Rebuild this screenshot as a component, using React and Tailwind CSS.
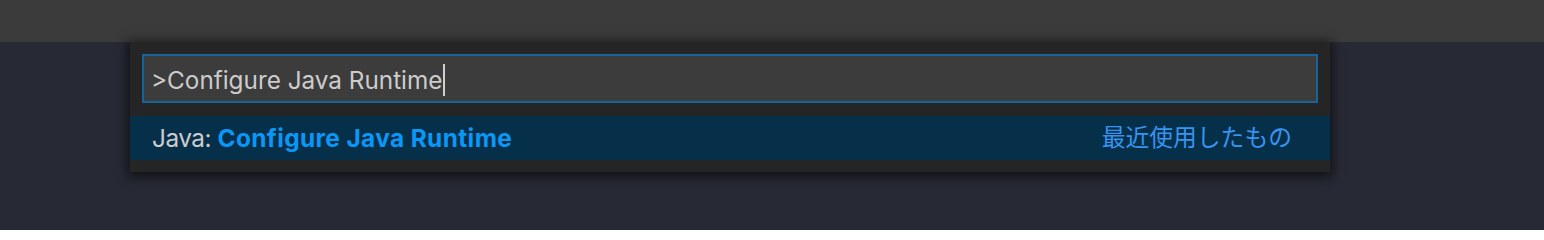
import React from "react";

const App = () => {
  return (
    <main className="w-full h-[230px] bg-[#272934] overflow-hidden font-['Inter','Noto_Sans_CJK_JP',sans-serif]">
      {/* Title / tab strip */}
      <div className="h-[42px] bg-[#3b3b3b]" />

      {/* Quick open widget */}
      <div className="ml-[130px] w-[1200px] bg-[#252526] shadow-[0_2px_10px_3px_rgba(0,0,0,0.55)] pt-[12px] pb-[12px]">
        <div className="mx-[12px] h-[49px] bg-[#3c3c3c] border-2 border-[#17649c] flex items-center pl-[7px] pt-[3px]">
          <span className="text-[24.3px] text-[#cccccc]">&gt;Configure Java Runtime</span>
          <span className="ml-[1px] w-[2px] h-[32px] bg-[#d0d0d0]" />
        </div>

        <div className="mt-[13px] h-[44px] bg-[#062f4a] flex items-center justify-between pl-[22px] pr-[38px]">
          <div className="text-[24.4px] text-[#cccccc]">
            <span className="tracking-[-0.5px]">Java: </span>
            <span className="font-bold text-[#0a97f5] tracking-[0.4px]">Configure Java Runtime</span>
          </div>
          <div className="text-[23.8px] text-[#3794ee]">最近使用したもの</div>
        </div>
      </div>
    </main>
  );
};

export default App;
